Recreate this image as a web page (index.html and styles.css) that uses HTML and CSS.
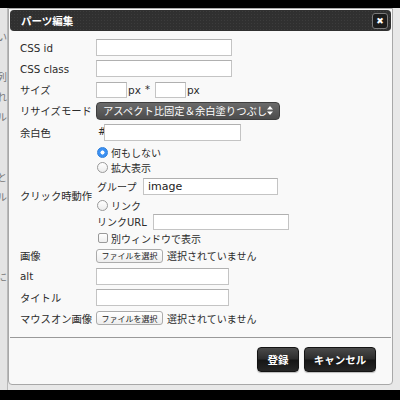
FILE: index.html
```html
<!DOCTYPE html>
<html lang="ja">
<head>
    <meta charset="UTF-8">
    <meta name="viewport" content="width=device-width, initial-scale=1.0">
    <title>パーツ編集</title>
    <link rel="stylesheet" href="styles.css">
</head>
<body>
    <div class="screen">
        <div class="topbar"></div>
        <div class="page">
            <div class="page-strip">
                <div class="frag"></div>
                <div class="frag">しい</div>
                <div class="frag"></div>
                <div class="frag">の列</div>
                <div class="frag">これ</div>
                <div class="frag">ール</div>
                <div class="frag"></div>
                <div class="frag"></div>
                <div class="frag">こと</div>
                <div class="frag">ール</div>
                <div class="frag"></div>
                <div class="frag"></div>
                <div class="frag"></div>
                <div class="frag">んに</div>
            </div>
        </div>
        <div class="bottombar"></div>

        <div class="dialog">
            <div class="titlebar">
                <span class="title">パーツ編集</span>
                <button class="close">&#x2716;</button>
            </div>

            <div class="form">
                <div class="row r21">
                    <span class="label">CSS id</span>
                    <input type="text" class="text w136">
                </div>
                <div class="row r21">
                    <span class="label">CSS class</span>
                    <input type="text" class="text w136">
                </div>
                <div class="row r21">
                    <span class="label">サイズ</span>
                    <input type="text" class="text small">
                    <span class="unit">px</span>
                    <span class="times">*</span>
                    <input type="text" class="text small">
                    <span class="unit">px</span>
                </div>
                <div class="row r21">
                    <span class="label">リサイズモード</span>
                    <div class="select">
                        <span>アスペクト比固定＆余白塗りつぶし</span>
                        <svg class="arrows" width="6" height="9" viewBox="0 0 6 9">
                            <path d="M3 0 L6 3.4 L0 3.4 Z M3 9 L6 5.6 L0 5.6 Z" fill="#fff"/>
                        </svg>
                    </div>
                </div>
                <div class="row r23">
                    <span class="label">余白色</span>
                    <span class="hash">#</span>
                    <input type="text" class="text w137">
                </div>

                <div class="row block">
                    <span class="label">クリック時動作</span>
                    <div class="options">
                        <div class="line l16">
                            <span class="radio checked"></span>何もしない
                        </div>
                        <div class="line l15">
                            <span class="radio"></span>拡大表示
                        </div>
                        <div class="line l22">
                            <span class="sub-label group">グループ</span>
                            <input type="text" class="text w135" value="image">
                        </div>
                        <div class="line l16">
                            <span class="radio"></span>リンク
                        </div>
                        <div class="line l17">
                            <span class="sub-label url">リンクURL</span>
                            <input type="text" class="text w136 short">
                        </div>
                        <div class="line l16">
                            <span class="checkbox"></span>別ウィンドウで表示
                        </div>
                    </div>
                </div>

                <div class="row r19">
                    <span class="label">画像</span>
                    <button class="file">ファイルを選択</button>
                    <span class="none">選択されていません</span>
                </div>
                <div class="row r22">
                    <span class="label">alt</span>
                    <input type="text" class="text w133">
                </div>
                <div class="row r21">
                    <span class="label">タイトル</span>
                    <input type="text" class="text w133">
                </div>
                <div class="row r20">
                    <span class="label">マウスオン画像</span>
                    <button class="file">ファイルを選択</button>
                    <span class="none">選択されていません</span>
                </div>
            </div>

            <div class="footer">
                <button class="btn save">登録</button>
                <button class="btn cancel">キャンセル</button>
            </div>
        </div>
    </div>
</body>
</html>
```

FILE: styles.css
```css
* {
    margin: 0;
    padding: 0;
    box-sizing: border-box;
}

body {
    font-family: "DejaVu Sans", "Noto Sans CJK JP", sans-serif;
    font-size: 10px;
    color: #2b2b2b;
    background-color: #e6e6e6;
}

.screen {
    position: relative;
    width: 400px;
    height: 400px;
    overflow: hidden;
    background-color: #e8e8e8;
}

.topbar {
    height: 8px;
    background-color: #000000;
}

.page {
    height: 382px;
}

.page-strip {
    width: 8px;
    height: 100%;
    border-right: 1px solid #b9b9b9;
    background-color: #e4e4e4;
    color: #777777;
}

.frag {
    height: 20px;
    line-height: 20px;
    display: flex;
    justify-content: flex-end;
    overflow: hidden;
    white-space: nowrap;
    font-size: 10px;
}

.bottombar {
    height: 10px;
    background-color: #000000;
}

/* dialog */
.dialog {
    position: absolute;
    left: 8px;
    top: 8px;
    width: 385px;
    height: 377px;
    border: 1px solid #a8a8a8;
    border-radius: 0 0 4px 4px;
    padding: 1px;
    background-color: #f9f9f9;
    display: flex;
    flex-direction: column;
}

.titlebar {
    height: 21px;
    display: flex;
    align-items: center;
    justify-content: space-between;
    padding: 0 3px 0 11px;
    border-radius: 4px;
    background-color: #303030;
    background-image: radial-gradient(#3c3c3c 0.8px, transparent 0.8px);
    background-size: 3px 3px;
}

.title {
    color: #ffffff;
    font-weight: bold;
    font-size: 10.5px;
}

.close {
    width: 16px;
    height: 16px;
    border: 1px solid #7a7a7a;
    border-radius: 3px;
    background-color: #1c1c1c;
    color: #ffffff;
    font-size: 9px;
    line-height: 14px;
    font-family: "DejaVu Sans", sans-serif;
}

.form {
    flex: 0 0 auto;
    padding: 6px 0 9px 10px;
    border-bottom: 1px solid #9a9a9a;
}

.row {
    display: flex;
    align-items: center;
}

.r19 { height: 19px; }
.r20 { height: 20px; }
.r21 { height: 21px; }
.r22 { height: 22px; }
.r23 { height: 23px; }

.label {
    width: 76px;
    flex: 0 0 76px;
    white-space: nowrap;
    font-size: 10.3px;
}

.text {
    height: 17px;
    border: 1px solid #c4c4c4;
    border-top-color: #b0b0b0;
    background-color: #ffffff;
    font-family: "DejaVu Sans", sans-serif;
    font-size: 11px;
    color: #222222;
    padding: 0 4px;
    outline: none;
}

.w133 { width: 133px; }
.w135 { width: 135px; }
.w136 { width: 136px; }
.w137 { width: 137px; }

.small {
    width: 31px;
    height: 16px;
}

.short {
    height: 16px;
}

.unit {
    margin-left: 1px;
    font-size: 10.5px;
}

.times {
    margin: 0 5px 0 4px;
}

.hash {
    margin: -2px 0 0 2px;
    width: 6px;
}

.select {
    width: 184px;
    height: 18px;
    display: flex;
    align-items: center;
    justify-content: space-between;
    padding: 0 6px 0 6px;
    border: 1px solid #3e3e3e;
    border-radius: 4px;
    background: linear-gradient(#6a6a6a, #4c4c4c);
    color: #ffffff;
    font-size: 10.3px;
    white-space: nowrap;
}

.arrows {
    flex: 0 0 auto;
}

.block {
    height: 102px;
}

.options {
    display: flex;
    flex-direction: column;
}

.line {
    display: flex;
    align-items: center;
    white-space: nowrap;
}

.l15 { height: 15px; }
.l16 { height: 16px; }
.l17 { height: 17px; }
.l22 { height: 22px; }

.radio {
    width: 11px;
    height: 11px;
    margin: 0 3px 0 1px;
    border: 1px solid #9a9a9a;
    border-radius: 50%;
    background: linear-gradient(#ffffff, #ececec);
}

.radio.checked {
    border-color: #2f7fdb;
    background: radial-gradient(circle, #ffffff 1.8px, #3b90f2 2.3px);
}

.checkbox {
    width: 10px;
    height: 10px;
    margin: 0 3px 0 2px;
    border: 1px solid #9a9a9a;
    border-radius: 2px;
    background: linear-gradient(#ffffff, #eeeeee);
}

.sub-label {
    margin-left: 1px;
}

.group {
    width: 46px;
}

.url {
    width: 56px;
}

.file {
    width: 67px;
    height: 14px;
    border: 1px solid #ababab;
    border-radius: 3px;
    background: linear-gradient(#ffffff, #ededed);
    font-family: "Noto Sans CJK JP", sans-serif;
    font-size: 8px;
    color: #222222;
}

.none {
    margin-left: 4px;
    white-space: nowrap;
}

.footer {
    flex: 1;
    display: flex;
    justify-content: flex-end;
    align-items: flex-start;
    gap: 5px;
    padding: 9px 15px 0 0;
}

.btn {
    height: 25px;
    border: 1px solid #141414;
    border-radius: 4px;
    background: linear-gradient(#4a4a4a 0%, #2c2c2c 48%, #161616 52%, #262626 100%);
    box-shadow: 0 1px 1px rgba(0, 0, 0, 0.25);
    color: #ffffff;
    font-family: "DejaVu Sans", "Noto Sans CJK JP", sans-serif;
    font-size: 10.5px;
    font-weight: bold;
}

.save { width: 42px; }
.cancel { width: 72px; }
```
